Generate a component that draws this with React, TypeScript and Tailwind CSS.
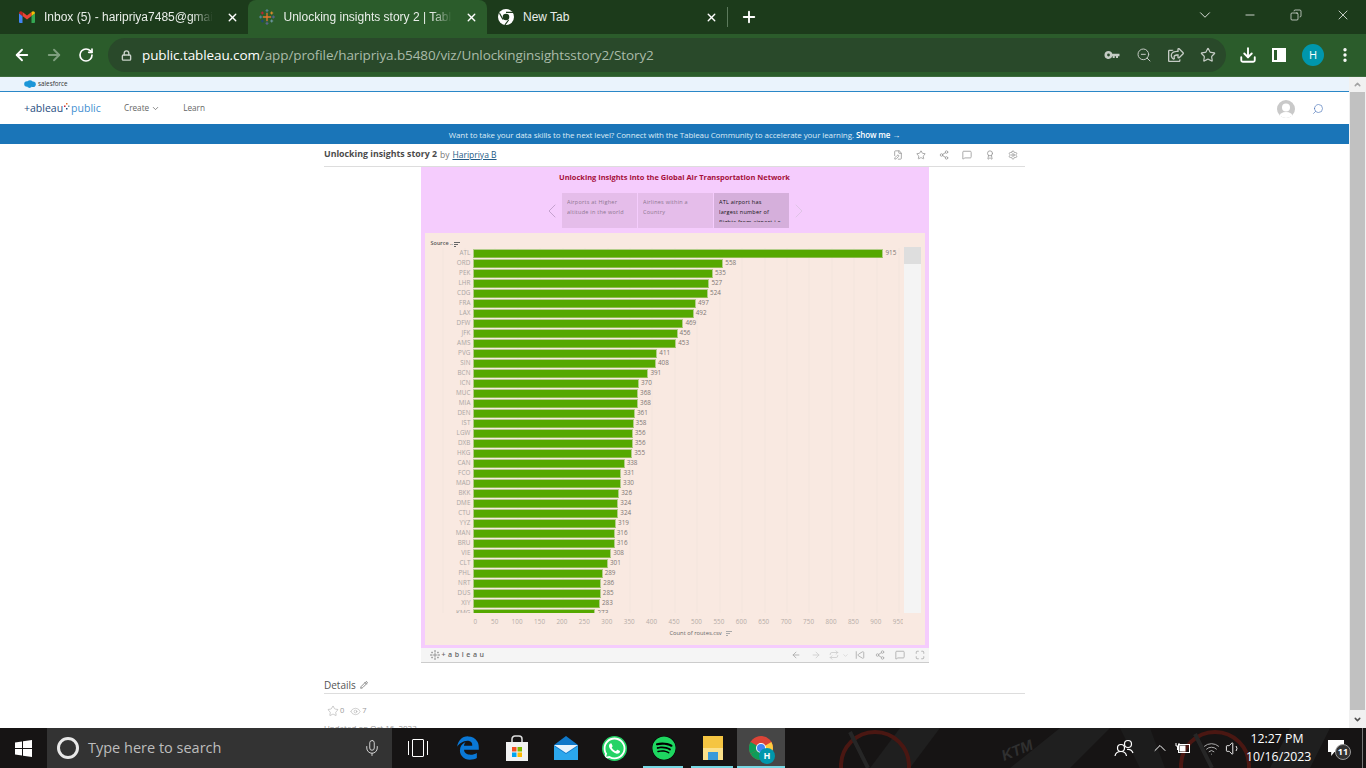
import { ArrowLeft, ArrowRight, Award, ChevronDown, ChevronLeft, ChevronRight, ChevronUp, Copy, Download, EllipsisVertical, Eye, FilePen, Lock, MessageSquare, Mic, Minus, Pencil, Plus, RotateCw, Search, Settings, Share2, SkipBack, Star, Volume1, Wifi, X, Maximize, Repeat, ZoomOut } from "lucide-react";
import { FaEdgeLegacy, FaRegShareSquare, FaSpotify, FaWhatsapp } from "react-icons/fa";
import type { ReactNode } from "react";

const airports: [string, number][] = [
    ["ATL", 915], ["ORD", 558], ["PEK", 535], ["LHR", 527], ["CDG", 524], ["FRA", 497], ["LAX", 492], ["DFW", 469],
    ["JFK", 456], ["AMS", 453], ["PVG", 411], ["SIN", 408], ["BCN", 391], ["ICN", 370], ["MUC", 368], ["MIA", 368],
    ["DEN", 361], ["IST", 358], ["LGW", 356], ["DXB", 356], ["HKG", 355], ["CAN", 338], ["FCO", 331], ["MAD", 330],
    ["BKK", 326], ["DME", 324], ["CTU", 324], ["YYZ", 319], ["MAN", 316], ["BRU", 316], ["VIE", 308], ["CLT", 301],
    ["PHL", 289], ["NRT", 286], ["DUS", 285], ["XIY", 283], ["KMG", 273],
];
const ticks = [50, 100, 150, 200, 250, 300, 350, 400, 450, 500, 550, 600, 650, 700, 750, 800, 850, 900, 950];

function GmailIcon() {
    return <svg width="16" height="12" viewBox="0 0 16 12" className="shrink-0">
        <path d="M0 2v9a1 1 0 0 0 1 1h2.500V5z" fill="#4285f4" />
        <path d="M16 2v9a1 1 0 0 1-1 1h-2.500V5z" fill="#34a853" />
        <path d="M3.500 5V1L8 4.500 12.500 1v4L8 8.400z" fill="#ea4335" />
        <path d="M0 2.200C0 .6 1.900-.4 3.500 1v4L0 2.200z" fill="#c5221f" />
        <path d="M16 2.200C16 .6 14.100-.4 12.500 1v4L16 2.200z" fill="#fbbc04" />
    </svg>
}

function TableauMark({ mono, size = 16 }: { mono?: boolean; size?: number }) {
    const c = (v: string) => mono ? "#8a8a8a" : v
    return <svg width={size} height={size} viewBox="0 0 16 16" className="shrink-0" strokeWidth="1">
        <path d="M8 4v8M4 8h8" stroke={c("#e8762d")} strokeWidth="1.300" />
        <path d="M8 0v3.500M6.500 1.700h3" stroke={c("#5b879b")} />
        <path d="M8 12.500V16M6.500 14.300h3" stroke={c("#5c6692")} />
        <path d="M0 8h3.500M1.700 6.500v3" stroke={c("#59879b")} />
        <path d="M12.500 8H16M14.300 6.500v3" stroke={c("#5b6591")} />
        <path d="M3.300 2.500v3M1.800 4h3" stroke={c("#c72037")} />
        <path d="M12.700 2.500v3M11.200 4h3" stroke={c("#eb912b")} />
        <path d="M3.300 10.500v3M1.800 12h3" stroke={c("#1f457e")} />
        <path d="M12.700 10.500v3M11.200 12h3" stroke={c("#7099a6")} />
    </svg>
}

function ChromeMono() {
    return <svg width="16" height="16" viewBox="0 0 16 16" className="shrink-0">
        <circle cx="8" cy="8" r="8" fill="#fff" />
        <circle cx="8" cy="8" r="3.300" fill="#1c3b1b" />
        <path d="M8 3.300h7M5 10.500 1.500 4.300M10.600 11 7 15.800" stroke="#1c3b1b" strokeWidth="1.200" />
    </svg>
}

function Tab({ icon, title, active, fade }: { icon: ReactNode; title: string; active?: boolean; fade?: boolean }) {
    return <div className={`flex h-[34px] w-[239.500px] items-center gap-[9px] pl-[11px] pr-[9px] ${active ? "rounded-t-[8px] bg-[#2b5c2b]" : ""}`}>
        {icon}
        <span className={`min-w-0 flex-1 overflow-hidden whitespace-nowrap font-['Liberation_Sans',sans-serif] text-[12px] text-[#e9eee9] ${fade ? "[mask-image:linear-gradient(to_right,black_88%,transparent)]" : ""}`}>{title}</span>
        <X size={13} strokeWidth={2.500} className="ml-[4px] shrink-0 text-white" />
    </div>
}

function Browser() {
    return <header className="shrink-0">
        <div className="flex h-[34px] items-end bg-[#1c3b1b] pl-[8px]">
            <Tab icon={<GmailIcon />} title="Inbox (5) - haripriya7485@gmail.com" fade />
            <Tab icon={<TableauMark />} title="Unlocking insights story 2 | Tableau Public" active fade />
            <Tab icon={<ChromeMono />} title="New Tab" />
            <span className="mb-[7px] h-[20px] w-px bg-[#5c7a5c]" />
            <Plus size={18} strokeWidth={2.500} className="mb-[8px] ml-[12px] text-white" />
            <div className="ml-auto flex items-center self-start pt-[6px] text-white">
                <ChevronDown size={18} strokeWidth={1.100} className="mr-[29px]" />
                <Minus size={14} strokeWidth={1.300} className="mr-[33px]" />
                <Copy size={12} strokeWidth={1.300} className="mr-[33px] -scale-x-100" />
                <X size={16} strokeWidth={1.100} className="mr-[15px]" />
            </div>
        </div>
        <div className="flex h-[43px] items-center border-b border-[#3d6b3d] bg-[#2b5c2b] pl-[13px]">
            <ArrowLeft size={18} strokeWidth={2.500} className="text-white" />
            <ArrowRight size={18} strokeWidth={2.500} className="ml-[14px] text-[#7f9f7f]" />
            <RotateCw size={16} strokeWidth={2.500} className="ml-[15px] text-white" />
            <div className="ml-[14px] flex h-[34px] w-[1118px] items-center rounded-full bg-[#29492a] pl-[13px] pr-[10px]">
                <Lock size={11} strokeWidth={3} className="text-[#c9d2c9]" />
                <span className="ml-[10px] whitespace-nowrap font-['Open_Sans',sans-serif] text-[13.500px] tracking-[-0.1px] text-[#a9bba9]"><span className="text-white">public.tableau.com</span>/app/profile/haripriya.b5480/viz/Unlockinginsightsstory2/Story2</span>
                <div className="ml-auto flex items-center gap-[16px] text-[#c4cbc4]">
                    <svg width="16" height="16" viewBox="0 0 16 16" fill="currentColor"><path fillRule="evenodd" d="M4.500 4a4 4 0 0 1 3.800 2.800H15.500v2.400H14V11h-2V9.200h-1.300V11h-2V9.200h-.4A4 4 0 1 1 4.500 4zm0 2.600a1.400 1.400 0 1 0 0 2.800 1.400 1.400 0 0 0 0-2.800z" /></svg>
                    <ZoomOut size={16} strokeWidth={1.500} />
                    <FaRegShareSquare size={16} />
                    <Star size={16} strokeWidth={1.800} />
                </div>
            </div>
            <div className="ml-[13px] flex items-center text-white">
                <Download size={18} strokeWidth={2.500} />
                <span className="ml-[15px] flex h-[14px] w-[14px] justify-end border-[2px] border-white"><span className="h-full w-[7px] bg-white" /></span>
                <span className="ml-[16px] flex h-[22px] w-[22px] items-center justify-center rounded-full bg-[#0097ac] font-['Open_Sans',sans-serif] text-[11px]">H</span>
                <EllipsisVertical size={18} strokeWidth={2.500} className="ml-[12px]" />
            </div>
        </div>
    </header>
}

function SiteHeader() {
    return <>
        <div className="flex h-[15px] items-center gap-[2px] border-b border-[#2a87c7] bg-[#eaf3fc] pl-[24px]">
            <svg width="12" height="8" viewBox="0 0 12 8" fill="#1b96d8"><circle cx="3" cy="4" r="2.800" /><circle cx="6" cy="3" r="2.800" /><circle cx="9" cy="4.200" r="2.800" /><circle cx="5.500" cy="5.500" r="2.400" /></svg>
            <span className="font-['Open_Sans',sans-serif] text-[6.300px] leading-none text-[#333]">salesforce</span>
        </div>
        <nav className="flex h-[33px] items-center border-b border-[#1a75b8] pl-[24px] pr-[24px] pt-[1px] font-['Open_Sans',sans-serif]">
            <span className="flex w-[100px] items-center text-[10.500px] font-medium leading-none text-[#1f4d80]">
                +ableau
                <svg width="6" height="8" viewBox="0 0 6 8" className="mx-[1px] -mt-[3px]"><rect x="2" y="0" width="1.500" height="1.500" fill="#e8762d" /><rect x="0" y="2.500" width="1.500" height="1.500" fill="#c72037" /><rect x="4" y="2.500" width="1.500" height="1.500" fill="#7099a6" /><rect x="2" y="5" width="1.500" height="1.500" fill="#1f457e" /></svg>
                <span className="text-[#3f8fd2]">public</span>
            </span>
            <span className="flex items-center gap-[2px] text-[8.200px] text-[#666]">Create <ChevronDown size={9} /></span>
            <span className="ml-[23px] text-[8.200px] text-[#666]">Learn</span>
            <svg width="18" height="18" viewBox="0 0 18 18" className="ml-auto"><clipPath id="a"><circle cx="9" cy="9" r="9" /></clipPath><g clipPath="url(#a)"><rect width="18" height="18" fill="#c9c9c9" /><circle cx="9" cy="7.500" r="4" fill="#fff" /><ellipse cx="9" cy="17" rx="7" ry="5" fill="#fff" /></g></svg>
            <Search size={12} strokeWidth={1.300} className="ml-[17px] mr-[1px] -scale-x-100 text-[#4a74b8]" />
        </nav>
        <div className="flex h-[19px] items-center justify-center bg-[#1a75b8] font-['Open_Sans',sans-serif] text-[8px] tracking-[-0.1px] text-[#dcebf6]">
            Want to take your data skills to the next level? Connect with the Tableau Community to accelerate your learning.&nbsp;<b className="font-semibold text-white">Show me →</b>
        </div>
    </>
}

function TitleRow() {
    return <div className="flex h-[23px] items-center border-b border-[#dddddd] font-['Open_Sans',sans-serif] text-[8.500px] text-[#777]">
        <b className="text-[8.800px] font-bold text-[#4b4b4b]">Unlocking insights story 2</b>
        <span className="ml-[3px]">by</span>
        <span className="ml-[3px] text-[#245a85] underline">Haripriya B</span>
        <div className="ml-auto mr-[7px] flex items-center gap-[13px] text-[#999]">
            <FilePen size={10} />
            <Star size={10} />
            <Share2 size={10} />
            <MessageSquare size={10} />
            <Award size={10} />
            <Settings size={10} />
        </div>
    </div>
}

function StoryTab({ lines, active }: { lines: string[]; active?: boolean }) {
    return <div className={`h-[35px] w-[75px] pl-[5px] pt-[4px] text-[5.500px] leading-[10px] tracking-[0.25px] ${active ? "bg-[#d5afdb] text-[#111]" : "bg-[#e5bdea] text-[#8d7890]"}`}>
        <div className="h-[25px] overflow-hidden">
            {lines.map(l => <div key={l} className="whitespace-nowrap">{l}</div>)}
        </div>
    </div>
}

function Chart() {
    return <div className="mx-[4px] h-[412px] bg-[#f9e9e1] font-['Open_Sans',sans-serif]">
        <div className="flex h-[15px] items-end gap-[1px] pl-[6px] text-[5.500px] font-semibold leading-[9px] text-[#555]">Source ..<span className="mb-[1px] flex w-[6px] flex-col gap-px"><i className="h-px w-[6px] bg-[#666]" /><i className="h-px w-[4px] bg-[#666]" /><i className="h-px w-[2px] bg-[#666]" /></span></div>
        <div className="flex h-[365px]">
            <div className="h-full w-[479px] shrink-0 overflow-hidden bg-[repeating-linear-gradient(to_right,transparent_0,transparent_21.400px,#f3e5dd_21.400px,#f3e5dd_22.430px)] bg-[position:48.500px_0]">
                {airports.map(([code, n]) => <div key={code} className="flex h-[10px] items-center text-[6.300px] leading-none">
                    <span className="w-[46px] shrink-0 text-right tracking-[0.1px] text-[#aaa6a3]">{code}</span>
                    <span className="ml-[2.500px] h-[9px] shrink-0 border border-[#b3cd8a] border-b-[#8dbb4d] bg-[#55a800]" style={{ width: n * 0.4486 }} />
                    <span className="ml-[2px] text-[#7d7773]">{n}</span>
                </div>)}
            </div>
            <div className="-mt-[1px] mr-[4px] w-[17px] bg-[#f4f4f4]"><div className="h-[17px] bg-[#dedede]" /></div>
        </div>
        <div className="ml-[48px] mt-[3px] flex h-[12px] w-[430px] items-center overflow-hidden text-[6.300px] tracking-[0.1px] text-[#b5aca7]">
            <span className="w-[11px] shrink-0 pl-[1px]">0</span>
            {ticks.map(t => <span key={t} className="w-[22.430px] shrink-0 text-center">{t}</span>)}
        </div>
        <div className="mt-[1px] flex items-center justify-center gap-[4px] pl-[52px] text-[5.800px] font-medium text-[#666]">Count of routes.csv <span className="flex w-[6px] flex-col gap-px"><i className="h-px w-[6px] bg-[#aaa]" /><i className="h-px w-[4px] bg-[#aaa]" /><i className="h-px w-[2px] bg-[#aaa]" /></span></div>
    </div>
}

function Viz() {
    return <div className="mx-auto w-[508px]">
        <div className="h-[481px] bg-[#f5ccfd] font-['Open_Sans',sans-serif]">
            <div className="pt-[6px] text-center text-[7.450px] font-bold leading-[9px] text-[#a5103c]">Unlocking Insights into the Global Air Transportation Network</div>
            <div className="mt-[11px] flex h-[35px] items-center justify-center gap-px pl-[2px]">
                <ChevronLeft size={24} strokeWidth={0.900} className="-mx-[3px] text-[#c09dca]" />
                <StoryTab lines={["Airports at Higher", "altitude in the world"]} />
                <StoryTab lines={["Airlines within a", "Country"]} />
                <StoryTab lines={["ATL airport has", "largest number of", "flights from airport i.e"]} active />
                <ChevronRight size={24} strokeWidth={0.900} className="-mx-[3px] text-[#dcc3e3]" />
            </div>
            <div className="h-[5px]" />
            <Chart />
        </div>
        <div className="flex h-[15px] items-center border-b border-[#cccccc] bg-[#f5f5f5] pl-[9px] pr-[4px] text-[#aaa]">
            <TableauMark mono size={10} />
            <span className="ml-[2px] font-['Open_Sans',sans-serif] text-[7px] font-semibold tracking-[2.600px] text-[#666]">+ableau</span>
            <div className="ml-auto flex items-center">
                <ArrowLeft size={10} />
                <ArrowRight size={10} className="ml-[10px] text-[#ccc]" />
                <Repeat size={10} className="ml-[8px] text-[#ccc]" />
                <ChevronDown size={7} className="ml-[3px] text-[#ccc]" />
                <SkipBack size={10} className="ml-[6px]" />
                <Share2 size={10} className="ml-[10px]" />
                <MessageSquare size={10} className="ml-[10px]" />
                <Maximize size={10} className="ml-[10px]" />
            </div>
        </div>
    </div>
}

function Scrollbar() {
    return <div className="flex w-[17px] shrink-0 flex-col items-center bg-[#f1f1f1]">
        <ChevronUp size={9} strokeWidth={4} className="mt-[3px] text-[#a3a3a3]" />
        <div className="mt-[3px] h-[618px] w-[15px] bg-[#c1c1c1]" />
        <ChevronDown size={9} strokeWidth={4} className="mt-auto mb-[4px] text-[#505050]" />
    </div>
}

function Wallpaper() {
    return <svg width="1366" height="40" viewBox="0 0 1366 40" className="absolute inset-0" fill="none">
        <path d="M900 0h40l-30 40h-40zM1060 0h50l-40 40h-60zM1290 0h40l-20 40h-40z" fill="#1f1f1f" />
        <path d="M1120 0h30l15 40h-25z" fill="#1c1c1c" />
        <circle cx="875" cy="38" r="34" stroke="#4a1712" strokeWidth="4" />
        <circle cx="1215" cy="38" r="34" stroke="#4a1712" strokeWidth="4" />
        <path d="M850 4 868 40M1195 6 1212 40" stroke="#262626" strokeWidth="4" />
        <text x="1004" y="33" transform="rotate(-22 1004 33)" fill="#303030" fontFamily="Liberation Sans" fontSize="15" fontWeight="700" fontStyle="italic">KTM</text>
    </svg>
}

function Taskbar() {
    return <footer className="relative h-[40px] shrink-0 overflow-hidden bg-[#161414] text-white">
        <Wallpaper />
        <div className="relative flex h-full items-center">
            <div className="flex w-[47px] justify-center">
                <svg width="17" height="17" viewBox="0 0 17 17" fill="#fff"><path d="M0 2.500 7 1.500v6.500H0zM8 1.300 17 0v8H8zM0 9h7v6.500l-7-1zM8 9h9v8l-9-1.300z" /></svg>
            </div>
            <div className="flex h-full w-[345px] items-center bg-[#333333] pl-[10px] font-['Open_Sans',sans-serif] text-[14.500px] text-[#bdbdbd]">
                <span className="h-[22px] w-[22px] rounded-full border-[3px] border-[#e8e8e8]" />
                <span className="ml-[9px]">Type here to search</span>
                <Mic size={18} strokeWidth={1.300} className="ml-auto mr-[11px] text-[#d5d5d5]" />
            </div>
            <div className="ml-[16px] flex h-[14px] w-[20px] items-center justify-center border-x border-white"><span className="h-[18px] w-[12px] rounded-[1px] border border-white bg-[#161414]" /></div>
            <div className="ml-[15px] flex items-center">
                <span className="flex w-[49px] justify-center"><FaEdgeLegacy size={24} className="text-[#0a78d6]" /></span>
                <span className="flex w-[49px] justify-center">
                    <svg width="24" height="26" viewBox="0 0 24 26"><path d="M7 7V4a3 3 0 0 1 3-3h4a3 3 0 0 1 3 3v3" fill="none" stroke="#ddd" strokeWidth="1.500" /><rect x="1" y="7" width="22" height="19" fill="#f2f2f2" /><rect x="7" y="12" width="4.500" height="4.500" fill="#f25022" /><rect x="12.500" y="12" width="4.500" height="4.500" fill="#7fba00" /><rect x="7" y="17.500" width="4.500" height="4.500" fill="#00a4ef" /><rect x="12.500" y="17.500" width="4.500" height="4.500" fill="#ffb900" /></svg>
                </span>
                <span className="flex w-[49px] justify-center">
                    <svg width="24" height="24" viewBox="0 0 24 24"><path d="M0 9 12 0l12 9v15H0z" fill="#0f78c9" /><path d="M0 9h24L12 17z" fill="#e8f4fc" /><path d="M0 10v14h24V10L12 18z" fill="#2ba7ec" /></svg>
                </span>
                <span className="flex w-[49px] justify-center"><FaWhatsapp size={25} className="rounded-full bg-[#25d366]" /></span>
                <span className="flex w-[49px] justify-center"><FaSpotify size={24} className="rounded-full bg-black text-[#1ed760]" /></span>
                <span className="flex w-[49px] justify-center">
                    <svg width="22" height="24" viewBox="0 0 22 24"><path d="M1 0h20v24H1z" fill="#f5c542" /><path d="M1 12h20v12H1z" fill="#fbe08a" /><rect x="6" y="16" width="10" height="8" fill="#3a9ad9" /></svg>
                </span>
                <span className="relative flex h-[40px] w-[48px] items-center justify-center bg-[#464646]">
                    <svg width="24" height="24" viewBox="0 0 24 24"><circle cx="12" cy="12" r="12" fill="#db4437" /><path d="M12 12 1.600 18A12 12 0 0 0 12 24z" fill="#0f9d58" /><path d="M1.600 6A12 12 0 0 0 1.600 18L12 12z" fill="#0f9d58" /><path d="M12 12 22.400 18A12 12 0 0 0 24 12a12 12 0 0 0-1.600-6z" fill="#ffcd40" /><circle cx="12" cy="12" r="5" fill="#fff" /><circle cx="12" cy="12" r="4" fill="#4285f4" /></svg>
                    <span className="absolute left-[22px] top-[20px] flex h-[16px] w-[16px] items-center justify-center rounded-full bg-[#0097ac] font-['Open_Sans',sans-serif] text-[9px] font-bold">H</span>
                </span>
            </div>
            <span className="absolute bottom-0 left-[643px] h-[2px] w-[40px] bg-[#76d7e3]" />
            <span className="absolute bottom-0 left-[691px] h-[2px] w-[42px] bg-[#76d7e3]" />
            <span className="absolute bottom-0 left-[737px] h-[2px] w-[48px] bg-[#76d7e3]" />
            <div className="ml-auto flex items-center">
                <svg width="20" height="18" viewBox="0 0 20 18" fill="none" stroke="#fff" strokeWidth="1.200"><circle cx="7" cy="9" r="3.500" /><path d="M1 17c.5-3 3-4.500 6-4.500s5 1.500 5.500 4.500" /><circle cx="14" cy="5" r="3.500" /><path d="M13 10.500c3-.5 5 1 6 3.500" /></svg>
                <ChevronUp size={20} strokeWidth={1.200} className="ml-[16px]" />
                <svg width="16" height="12" viewBox="0 0 16 12" className="ml-[5px]" fill="none" stroke="#fff"><rect x="3.500" y="2.500" width="11" height="8" /><rect x="5" y="4" width="5" height="5" fill="#fff" /><path d="M1 1v3h3V1M2.500 4v4" /></svg>
                <Wifi size={17} strokeWidth={1.300} className="ml-[12px] text-[#b8b8b8]" />
                <Volume1 size={17} strokeWidth={1.300} className="ml-[5px]" />
                <div className="ml-[4px] w-[62px] whitespace-nowrap text-center font-['Open_Sans',sans-serif] text-[12.300px] leading-[18px]"><div>12:27 PM</div><div>10/16/2023</div></div>
                <div className="relative ml-[20px] mr-[18px] h-[16px] w-[16px]">
                    <span className="absolute inset-0 bg-white [clip-path:polygon(0_0,100%_0,100%_75%,40%_75%,20%_100%,20%_75%,0_75%)]" />
                    <span className="absolute left-[7px] top-[4px] flex h-[16px] w-[16px] items-center justify-center rounded-full border border-[#999] bg-[#333] font-['Open_Sans',sans-serif] text-[9px] font-bold">11</span>
                </div>
                <span className="mr-[3px] h-[40px] w-px bg-[#777]" />
            </div>
        </div>
    </footer>
}

export default function App() {
    return <div className="flex h-[768px] w-[1366px] flex-col overflow-hidden bg-white">
        <Browser />
        <div className="flex h-[651px] min-h-0 flex-1 overflow-hidden">
            <main className="min-w-0 flex-1 overflow-hidden">
                <SiteHeader />
                <div className="mx-auto w-[701px]">
                    <TitleRow />
                    <Viz />
                    <div className="mt-[15px] flex h-[16px] items-center gap-[4px] border-b border-[#dddddd] pb-[1px] font-['Open_Sans',sans-serif] text-[10px] text-[#555]">Details <Pencil size={8} /></div>
                    <div className="mt-[11px] flex items-center pl-[3px] font-['Open_Sans',sans-serif] text-[7.500px] text-[#999]">
                        <Star size={12} strokeWidth={1} />
                        <span className="ml-[1px]">0</span>
                        <Eye size={11} strokeWidth={1} className="ml-[6px]" />
                        <span className="ml-[1px]">7</span>
                    </div>
                    <div className="mt-[5px] whitespace-nowrap font-['Open_Sans',sans-serif] text-[8px] text-[#999]">Updated on Oct 16, 2023</div>
                </div>
            </main>
            <Scrollbar />
        </div>
        <Taskbar />
    </div>
}
